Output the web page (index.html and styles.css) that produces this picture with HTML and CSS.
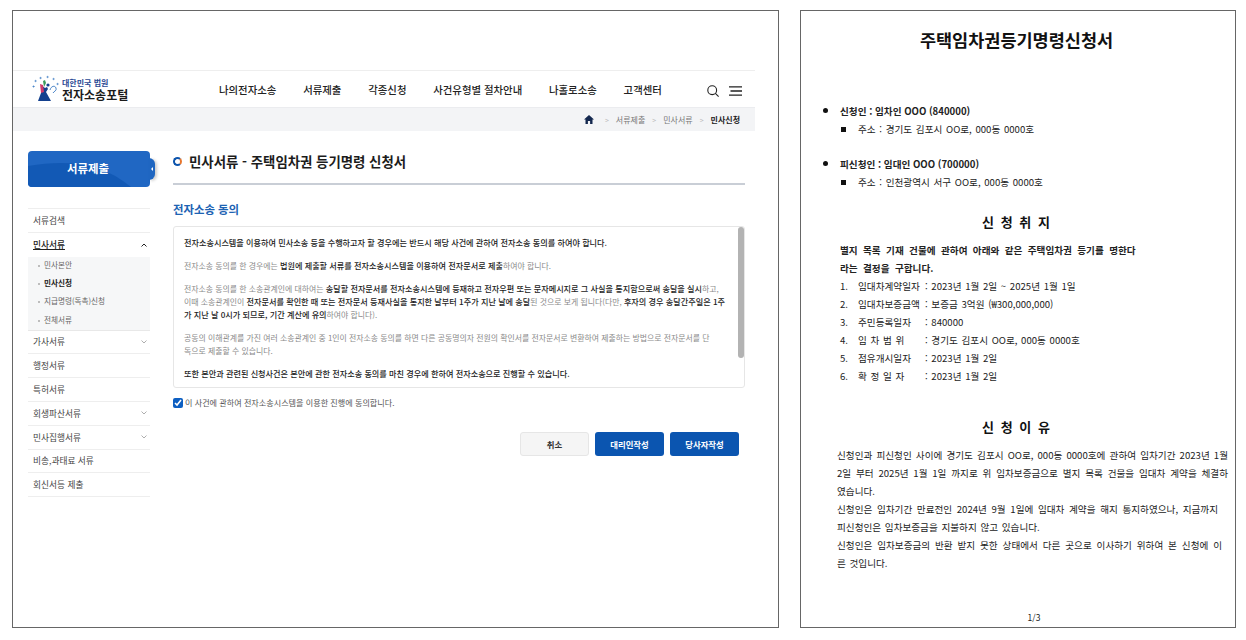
FILE: index.html
```html
<!DOCTYPE html>
<html lang="ko">
<head>
    <meta charset="UTF-8">
    <title>전자소송포털 - 주택임차권 등기명령 신청서</title>
    <link rel="stylesheet" href="styles.css">
</head>
<body>
    <div class="portal-frame">
        <header class="site-header">
            <div class="logo">
                <svg class="logo-mark" width="30" height="28" viewBox="0 0 30 28">
                    <g fill="#4c86c9">
                        <path d="M1 11.5l1.2-.4.4-1.2.4 1.2 1.2.4-1.2.4-.4 1.2-.4-1.2z"/>
                        <path d="M3 6l1.2-.4.4-1.2.4 1.2 1.2.4-1.2.4-.4 1.2-.4-1.2z"/>
                        <path d="M8 3l1.2-.4.4-1.2.4 1.2 1.2.4-1.2.4-.4 1.2-.4-1.2z"/>
                        <path d="M15 2l1.2-.4.4-1.2.4 1.2 1.2.4-1.2.4-.4 1.2-.4-1.2z"/>
                        <path d="M21 4l1.2-.4.4-1.2.4 1.2 1.2.4-1.2.4-.4 1.2-.4-1.2z"/>
                        <path d="M25 9l1.2-.4.4-1.2.4 1.2 1.2.4-1.2.4-.4 1.2-.4-1.2z"/>
                    </g>
                    <path d="M10 10l4 3 2-1 1 2-2 3 5 9H7l3-8z" fill="#14408e"/>
                    <path d="M9 9l3 1 1 7-3 1z" fill="#cf3a6a"/>
                    <path d="M12 6l2-1 1 3-2 4z" fill="#3a9a5a"/>
                    <circle cx="17" cy="10" r="1.6" fill="#14408e"/>
                    <path d="M19 15c1-4 5-5 6-2s-2 3-3 5" fill="none" stroke="#4c86c9" stroke-width="1"/>
                </svg>
                <div class="logo-text">
                    <span class="logo-court">대한민국 법원</span>
                    <span class="logo-name">전자소송포털</span>
                </div>
            </div>
            <nav class="main-nav">
                <a>나의전자소송</a>
                <a>서류제출</a>
                <a>각종신청</a>
                <a>사건유형별 절차안내</a>
                <a>나홀로소송</a>
                <a>고객센터</a>
            </nav>
            <div class="header-icons">
                <svg width="12" height="12" viewBox="0 0 12 12" fill="none" stroke="#222" stroke-width="1.1">
                    <circle cx="5.2" cy="5.2" r="4.4"/><path d="M8.4 8.4L11.6 11.6"/>
                </svg>
                <svg width="13" height="10" viewBox="0 0 13 10" fill="none" stroke="#222" stroke-width="1.3">
                    <path d="M0 .8h13M1.5 5h11.5M0 9.2h13"/>
                </svg>
            </div>
        </header>
        <div class="breadcrumb">
            <svg width="10" height="9" viewBox="0 0 10 9"><path d="M5 0L0 4.5h1.5V9h2.4V6h2.2v3h2.4V4.5H10z" fill="#14284f"/></svg>
            <span class="crumb-sep">&gt;</span><span>서류제출</span>
            <span class="crumb-sep">&gt;</span><span>민사서류</span>
            <span class="crumb-sep">&gt;</span><b>민사신청</b>
        </div>
        <div class="content">
            <aside class="sidebar">
                <div class="side-title">
                    <svg class="side-curve" width="122" height="36" viewBox="0 0 122 36"><path d="M0 15C40 8 75 12 103 36H0z" fill="#1259b5"/></svg>
                    <span>서류제출</span>
                    <i class="side-notch"></i>
                </div>
                <ul class="side-menu">
                    <li class="side-item">서류검색</li>
                    <li class="side-item is-open"><u>민사서류</u><svg class="chev" width="6" height="4" viewBox="0 0 6 4"><path d="M.5 3.5L3 1l2.5 2.5" fill="none" stroke="#222" stroke-width="1"/></svg></li>
                    <li class="side-sub">
                        <div>민사본안</div>
                        <div class="is-current">민사신청</div>
                        <div>지급명령(독촉)신청</div>
                        <div>전체서류</div>
                    </li>
                    <li class="side-item">가사서류<svg class="chev" width="6" height="4" viewBox="0 0 6 4"><path d="M.5 .5L3 3l2.5-2.5" fill="none" stroke="#999" stroke-width=".8"/></svg></li>
                    <li class="side-item">행정서류</li>
                    <li class="side-item">특허서류</li>
                    <li class="side-item">회생파산서류<svg class="chev" width="6" height="4" viewBox="0 0 6 4"><path d="M.5 .5L3 3l2.5-2.5" fill="none" stroke="#999" stroke-width=".8"/></svg></li>
                    <li class="side-item">민사집행서류<svg class="chev" width="6" height="4" viewBox="0 0 6 4"><path d="M.5 .5L3 3l2.5-2.5" fill="none" stroke="#999" stroke-width=".8"/></svg></li>
                    <li class="side-item">비송,과태료 서류</li>
                    <li class="side-item">회신서등 제출</li>
                </ul>
            </aside>
            <main class="main-col">
                <h1 class="page-title"><i class="title-dot"></i>민사서류 - 주택임차권 등기명령 신청서</h1>
                <h2 class="section-title">전자소송 동의</h2>
                <div class="consent-box">
                    <div class="consent-scroll"></div>
                    <p><b>전자소송시스템을 이용하여 민사소송 등을 수행하고자 할 경우에는 반드시 해당 사건에 관하여 전자소송 동의를 하여야 합니다.</b></p>
                    <p>전자소송 동의를 한 경우에는 <b>법원에 제출할 서류를 전자소송시스템을 이용하여 전자문서로 제출</b>하여야 합니다.</p>
                    <p>전자소송 동의를 한 소송관계인에 대하여는 <b>송달할 전자문서를 전자소송시스템에 등재하고 전자우편 또는 문자메시지로 그 사실을 통지함으로써 송달을 실시</b>하고,<br>
                    이때 소송관계인이 <b>전자문서를 확인한 때 또는 전자문서 등재사실을 통지한 날부터 1주가 지난 날에 송달</b>된 것으로 보게 됩니다(다만, <b>후자의 경우 송달간주일은 1주<br>
                    가 지난 날 0시가 되므로, 기간 계산에 유의</b>하여야 합니다).</p>
                    <p>공동의 이해관계를 가진 여러 소송관계인 중 1인이 전자소송 동의를 하면 다른 공동명의자 전원의 확인서를 전자문서로 변환하여 제출하는 방법으로 전자문서를 단<br>
                    독으로 제출할 수 있습니다.</p>
                    <p><b>또한 본안과 관련된 신청사건은 본안에 관한 전자소송 동의를 마친 경우에 한하여 전자소송으로 진행할 수 있습니다.</b></p>
                </div>
                <label class="consent-check"><input type="checkbox" checked>이 사건에 관하여 전자소송시스템을 이용한 진행에 동의합니다.</label>
                <div class="button-row">
                    <a class="btn btn-cancel">취소</a>
                    <a class="btn btn-primary">대리인작성</a>
                    <a class="btn btn-primary">당사자작성</a>
                </div>
            </main>
        </div>
    </div>

    <div class="doc-frame">
        <h1 class="doc-title">주택임차권등기명령신청서</h1>
        <div class="party">
            <div class="party-name"><i class="bullet-round"></i>신청인 : 임차인 OOO (840000)</div>
            <div class="party-addr"><i class="bullet-square"></i>주소 : 경기도 김포시 OO로, 000동 0000호</div>
        </div>
        <div class="party">
            <div class="party-name"><i class="bullet-round"></i>피신청인 : 임대인 OOO (700000)</div>
            <div class="party-addr"><i class="bullet-square"></i>주소 : 인천광역시 서구 OO로, 000동 0000호</div>
        </div>
        <h2 class="doc-heading">신 청 취 지</h2>
        <div class="purpose">
            <b>별지 목록 기재 건물에 관하여 아래와 같은 주택임차권 등기를 명한다</b>
            <b>라는 결정을 구합니다.</b>
        </div>
        <ol class="facts">
            <li><span>1.</span><span>임대차계약일자</span><span>: 2023년 1월 2일 ~ 2025년 1월 1일</span></li>
            <li><span>2.</span><span>임대차보증금액</span><span>: 보증금 3억원 (₩300,000,000)</span></li>
            <li><span>3.</span><span>주민등록일자</span><span>: 840000</span></li>
            <li><span>4.</span><span>임 차 범 위</span><span>: 경기도 김포시 OO로, 000동 0000호</span></li>
            <li><span>5.</span><span>점유개시일자</span><span>: 2023년 1월 2일</span></li>
            <li><span>6.</span><span>확 정 일 자</span><span>: 2023년 1월 2일</span></li>
        </ol>
        <h2 class="doc-heading doc-heading-reason">신 청 이 유</h2>
        <div class="reason">
            <div class="fill">신청인과 피신청인 사이에 경기도 김포시 OO로, 000동 0000호에 관하여 임차기간 2023년 1월</div>
            <div class="fill">2일 부터 2025년 1월 1일 까지로 위 임차보증금으로 별지 목록 건물을 임대차 계약을 체결하</div>
            <div>였습니다.</div>
            <div class="fill fill-short">신청인은 임차기간 만료전인 2024년 9월 1일에 임대차 계약을 해지 통지하였으나, 지금까지</div>
            <div>피신청인은 임차보증금을 지불하지 않고 있습니다.</div>
            <div class="fill fill-mid">신청인은 임차보증금의 반환 받지 못한 상태에서 다른 곳으로 이사하기 위하여 본 신청에 이</div>
            <div>른 것입니다.</div>
        </div>
        <div class="page-no">1/3</div>
    </div>
</body>
</html>
```

FILE: styles.css
```css
* {
    margin: 0;
    padding: 0;
    box-sizing: border-box;
}

body {
    font-family: "Noto Sans CJK KR", "Noto Sans", sans-serif;
    background-color: #fff;
    color: #222;
    display: flex;
    align-items: flex-start;
    gap: 21px;
    padding: 10px 0 0 12px;
    height: 640px;
    overflow: hidden;
}

/* left panel */
.portal-frame {
    width: 767px;
    height: 618px;
    border: 1px solid #666;
    padding-top: 59px;
    flex-shrink: 0;
}

.site-header {
    width: 742px;
    height: 37px;
    border-top: 1px solid #eee;
    display: flex;
    align-items: center;
    padding-left: 18px;
}

.logo {
    display: flex;
    align-items: center;
    width: 188px;
}

.logo-mark {
    flex-shrink: 0;
    margin-right: 1px;
}

.logo-text {
    display: flex;
    flex-direction: column;
    line-height: 11px;
    margin-top: -1px;
}

.logo-court {
    font-size: 8px;
    font-weight: 700;
    color: #2b4a94;
}

.logo-name {
    font-size: 12px;
    font-weight: 700;
    color: #1b1b1b;
    line-height: 13px;
}

.main-nav {
    display: flex;
    gap: 26.8px;
    font-size: 10.4px;
    font-weight: 500;
    color: #222;
    margin-top: 1px;
}

.header-icons {
    display: flex;
    align-items: center;
    gap: 10px;
    margin-left: 45px;
    margin-top: 3px;
}

.breadcrumb {
    width: 742px;
    height: 24px;
    background-color: #f3f4f6;
    border-top: 1px solid #ebecef;
    display: flex;
    align-items: center;
    justify-content: flex-end;
    gap: 6px;
    padding-right: 15px;
    font-size: 8px;
    color: #777;
}

.breadcrumb b {
    color: #222;
    font-weight: 700;
}

.breadcrumb svg {
    margin-right: 4px;
}

.crumb-sep {
    color: #bbb;
    font-size: 7px;
    margin: 0 1px;
}

.content {
    display: flex;
    padding: 20px 0 0 15px;
}

/* sidebar */
.sidebar {
    width: 122px;
    margin-right: 23px;
}

.side-title {
    position: relative;
    height: 36px;
    border-radius: 4px;
    background-color: #2067c3;
    color: #fff;
    font-size: 11.4px;
    font-weight: 700;
    display: flex;
    align-items: center;
    justify-content: center;
    padding: 0 2px 2px 0;
    margin-bottom: 21px;
}

.side-title span {
    position: relative;
}

.side-curve {
    position: absolute;
    left: 0;
    top: 0;
    border-radius: 4px;
}

.side-notch {
    position: absolute;
    right: -5px;
    top: 7px;
    width: 6px;
    height: 22px;
    background-color: #1f66c1;
    border-radius: 0 6px 6px 0;
    box-shadow: 2px 1px 3px rgba(0, 0, 0, .2);
}

.side-notch::after {
    content: "";
    position: absolute;
    left: 0;
    top: 9px;
    border: 2px solid transparent;
    border-right: 2px solid #fff;
}

.side-menu {
    list-style: none;
    border-top: 1px solid #eee;
    font-size: 8.7px;
    color: #444;
}

.side-item {
    height: 23.8px;
    display: flex;
    align-items: center;
    justify-content: space-between;
    padding: 0 3px 0 5px;
    border-bottom: 1px solid #eee;
}

.side-item.is-open {
    border-bottom: 0;
    color: #222;
    font-weight: 500;
}

.side-sub {
    background-color: #f6f7f8;
    height: 74px;
    border-bottom: 1px solid #e8e8e8;
    font-size: 7.6px;
    color: #666;
    padding: 0 0 0 16px;
}

.side-sub div {
    height: 18.4px;
    line-height: 16px;
    position: relative;
}

.side-sub div::before {
    content: "";
    position: absolute;
    left: -6px;
    top: 8px;
    width: 2px;
    height: 2px;
    border-radius: 50%;
    background-color: #aaa;
}

.side-sub .is-current {
    color: #222;
    font-weight: 700;
}

/* main column */
.main-col {
    width: 572px;
}

.page-title {
    height: 34px;
    border-bottom: 2px solid #c9ced6;
    font-size: 13.4px;
    font-weight: 700;
    color: #1c1c1c;
    display: flex;
    align-items: flex-start;
    line-height: 20px;
}

.title-dot {
    width: 9px;
    height: 9px;
    border-radius: 50%;
    border: 2.4px solid #0d55ad;
    border-right-color: #e8762d;
    margin: 6px 7px 0 0;
    flex-shrink: 0;
}

.section-title {
    font-size: 11.4px;
    font-weight: 700;
    color: #1d63b3;
    margin-top: 15px;
    line-height: 18px;
}

.consent-box {
    position: relative;
    height: 162px;
    margin-top: 8px;
    border: 1px solid #e6e6e6;
    border-radius: 3px;
    padding: 9px 0 0 10px;
    font-size: 7.9px;
    line-height: 13px;
    color: #8a8a8a;
    white-space: nowrap;
}

.consent-box p {
    margin-bottom: 10px;
}

.consent-box b {
    color: #222;
    font-size: 8.15px;
    font-weight: 500;
}

.consent-scroll {
    position: absolute;
    top: 0;
    right: 0;
    width: 6px;
    height: 131px;
    background-color: #b3b3b3;
    border-radius: 3px;
}

.consent-check {
    display: flex;
    align-items: center;
    gap: 2px;
    margin-top: 9px;
    font-size: 8.1px;
    color: #555;
    line-height: 12px;
}

.consent-check input {
    width: 10px;
    height: 10px;
    accent-color: #0d5fc2;
}

.button-row {
    display: flex;
    justify-content: flex-end;
    gap: 6px;
    margin-top: 23px;
    padding-right: 6px;
}

.btn {
    width: 69px;
    height: 24px;
    border-radius: 3px;
    display: flex;
    align-items: center;
    justify-content: center;
    font-size: 8.4px;
    font-weight: 700;
}

.btn-cancel {
    background-color: #f5f5f5;
    border: 1px solid #e6e6e6;
    color: #333;
}

.btn-primary {
    background-color: #0b55b0;
    color: #fff;
}

/* right panel */
.doc-frame {
    position: relative;
    width: 436px;
    height: 618px;
    border: 1px solid #666;
    padding-top: 17px;
    color: #222;
    font-size: 9.6px;
    word-spacing: 1px;
    flex-shrink: 0;
}

.doc-title {
    font-size: 17.5px;
    font-weight: 700;
    line-height: 24px;
    text-align: center;
    color: #111;
    padding-right: 3px;
    margin-bottom: 50px;
}

.party {
    margin-bottom: 17px;
    padding-left: 39px;
    line-height: 18px;
}

.party-name {
    font-weight: 700;
    position: relative;
    word-spacing: 0;
}

.party-addr {
    position: relative;
    padding-left: 18px;
}

.bullet-round {
    position: absolute;
    left: -17px;
    top: 6px;
    width: 5px;
    height: 5px;
    border-radius: 50%;
    background-color: #111;
}

.bullet-square {
    position: absolute;
    left: 1px;
    top: 7px;
    width: 5px;
    height: 5px;
    background-color: #111;
}

.doc-heading {
    font-size: 13px;
    font-weight: 700;
    line-height: 18px;
    text-align: center;
    word-spacing: 3px;
    color: #111;
    padding-right: 4px;
    margin-top: 22px;
    margin-bottom: 10px;
}

.purpose {
    padding-left: 39px;
    line-height: 18px;
    word-spacing: 2.7px;
}

.purpose b {
    display: block;
    font-weight: 700;
}

.facts {
    list-style: none;
    padding-left: 39px;
    line-height: 18px;
}

.facts li {
    display: grid;
    grid-template-columns: 18px 67px 1fr;
}

.doc-heading-reason {
    margin-top: 33px;
    margin-bottom: 10px;
}

.reason {
    padding-left: 36px;
    padding-right: 7px;
    line-height: 18px;
}

.fill {
    text-align: justify;
    text-align-last: justify;
}

.fill-short {
    margin-right: 10px;
}

.fill-mid {
    margin-right: 6px;
}

.page-no {
    position: absolute;
    left: 32px;
    right: 0;
    bottom: 4px;
    text-align: center;
    font-size: 8.5px;
}
```
